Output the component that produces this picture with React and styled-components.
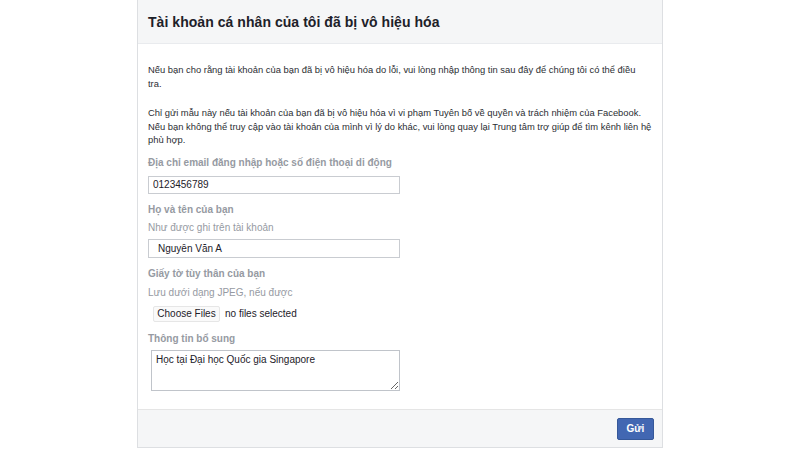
import React from "react";
import styled, { createGlobalStyle } from "styled-components";

const Global = createGlobalStyle`
  html, body { margin: 0; padding: 0; background: #ffffff; }
  body { font-family: "Liberation Sans", Arial, Helvetica, sans-serif; color: #1d2129; }
  * { box-sizing: border-box; }
`;

const Page = styled.div`
  width: 800px;
  height: 450px;
  overflow: hidden;
  padding-left: 137px;
`;

const Card = styled.div`
  width: 526px;
  height: 448px;
  border: 1px solid #dddfe2;
  border-top: 0;
  display: flex;
  flex-direction: column;
  background: #ffffff;
`;

const Header = styled.div`
  height: 44px;
  flex: 0 0 44px;
  background: #f5f6f7;
  border-bottom: 1px solid #e9ebee;
  display: flex;
  align-items: center;
  padding-left: 10px;
`;

const Title = styled.h2`
  margin: 0;
  font-size: 14px;
  font-weight: bold;
  color: #1d2129;
  letter-spacing: 0.05px;
`;

const Body = styled.div`
  flex: 1;
  padding: 19px 10px 0 10px;
`;

const Para = styled.p`
  margin: 0 0 ${(p) => p.$mb || 0}px 0;
  font-size: 9.4px;
  line-height: 13.5px;
  color: #2b2e33;
  width: ${(p) => p.$w || 500}px;
`;

const Label = styled.div`
  margin-top: ${(p) => p.$mt || 0}px;
  font-size: 10px;
  line-height: 14px;
  font-weight: bold;
  color: #969aa2;
`;

const Hint = styled.div`
  margin-top: ${(p) => p.$mt || 0}px;
  font-size: 10px;
  line-height: 14px;
  color: #969aa2;
`;

const TextInput = styled.input`
  display: block;
  margin-top: ${(p) => p.$mt || 0}px;
  width: 252px;
  height: ${(p) => p.$h || 18}px;
  border: 1px solid #c9ccd1;
  padding: 0 0 0 ${(p) => p.$pl || 4}px;
  font-family: "Liberation Sans", Arial, sans-serif;
  font-size: 10px;
  color: #1d2129;
  background: #ffffff;
  outline: none;
`;

const FileRow = styled.div`
  margin-top: 6px;
  margin-left: 5px;
  display: flex;
  align-items: center;
  gap: 5px;
  height: 16px;
`;

const FileButton = styled.span`
  flex: 0 0 67px;
  width: 67px;
  height: 16px;
  display: flex;
  align-items: center;
  justify-content: center;
  font-size: 10px;
  color: #1d2129;
  background: #fafafa;
  border: 1px solid #e6e6e6;
  border-radius: 2px;
  white-space: nowrap;
`;

const FileText = styled.span`
  font-size: 10px;
  color: #1d2129;
  white-space: nowrap;
`;

const TextArea = styled.textarea`
  display: block;
  margin-top: 4px;
  margin-left: 3px;
  width: 249px;
  height: 41px;
  border: 1px solid #c0c4ca;
  padding: 3px 4px;
  font-family: "Liberation Sans", Arial, sans-serif;
  font-size: 10px;
  line-height: 12px;
  color: #1d2129;
  resize: both;
  outline: none;
`;

const Footer = styled.div`
  flex: 0 0 38px;
  height: 38px;
  background: #f5f6f7;
  border-top: 1px solid #e5e5e5;
  display: flex;
  align-items: center;
  justify-content: flex-end;
  padding-right: 8px;
`;

const SubmitButton = styled.button`
  width: 37px;
  height: 22px;
  background: #4267b2;
  border: 1px solid #365899;
  border-radius: 2px;
  color: #ffffff;
  font-family: "Liberation Sans", Arial, sans-serif;
  font-size: 10px;
  font-weight: bold;
  padding: 0;
`;

export default function App() {
  return (
    <Page>
      <Global />
      <Card>
        <Header>
          <Title>Tài khoản cá nhân của tôi đã bị vô hiệu hóa</Title>
        </Header>
        <Body>
          <Para $mb={16} $w={495}>
            Nếu bạn cho rằng tài khoản của bạn đã bị vô hiệu hóa do lỗi, vui lòng nhập thông tin sau đây để chúng tôi có thể điều tra.
          </Para>
          <Para $w={510}>
            Chỉ gửi mẫu này nếu tài khoản của bạn đã bị vô hiệu hóa vì vi phạm Tuyên bố về quyền và trách nhiệm của Facebook. Nếu bạn không thể truy cập vào tài khoản của mình vì lý do khác, vui lòng quay lại Trung tâm trợ giúp để tìm kênh liên hệ phù hợp.
          </Para>
          <Label $mt={9}>Địa chỉ email đăng nhập hoặc số điện thoại di động</Label>
          <TextInput $mt={6} $h={18} $pl={4} readOnly defaultValue="0123456789" />
          <Label $mt={9}>Họ và tên của bạn</Label>
          <Hint $mt={4}>Như được ghi trên tài khoản</Hint>
          <TextInput $mt={4} $h={19} $pl={9} readOnly defaultValue="Nguyễn Văn A" />
          <Label $mt={9}>Giấy tờ tùy thân của bạn</Label>
          <Hint $mt={5}>Lưu dưới dạng JPEG, nếu được</Hint>
          <FileRow>
            <FileButton>Choose Files</FileButton>
            <FileText>no files selected</FileText>
          </FileRow>
          <Label $mt={10}>Thông tin bổ sung</Label>
          <TextArea readOnly defaultValue="Học tại Đại học Quốc gia Singapore" />
        </Body>
        <Footer>
          <SubmitButton>Gửi</SubmitButton>
        </Footer>
      </Card>
    </Page>
  );
}
